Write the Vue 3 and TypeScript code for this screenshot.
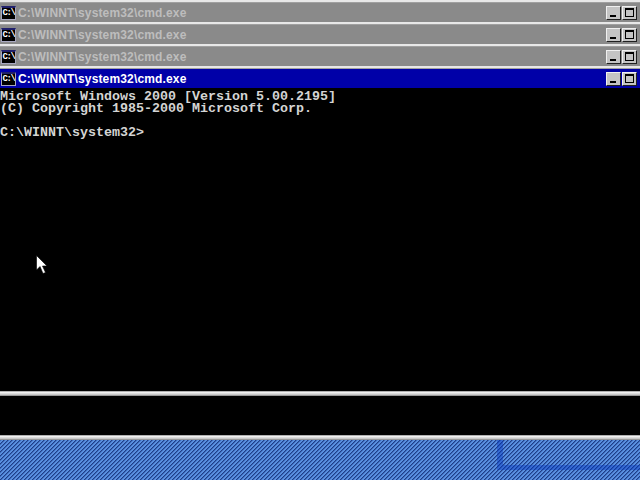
<script setup lang="ts">
const titles = [
  { id: 0, active: false },
  { id: 1, active: false },
  { id: 2, active: false },
  { id: 3, active: true },
]
const diagonal = [0, 1, 2, 3]
</script>

<template>
  <div class="screen">
    <div v-for="t in titles" :key="t.id" class="window">
      <div class="titlebar" :class="t.active ? 'active' : 'inactive'">
        <div class="appicon"><span>C:\</span></div>
        <span class="title">C:\WINNT\system32\cmd.exe</span>
        <div class="buttons">
          <div class="btn min"><i></i></div>
          <div class="btn max"><i></i></div>
        </div>
      </div>
    </div>
    <div class="console">
      <div class="line">Microsoft Windows 2000 [Version 5.00.2195]</div>
      <div class="line">(C) Copyright 1985-2000 Microsoft Corp.</div>
      <div class="line">&nbsp;</div>
      <div class="line">C:\WINNT\system32&gt;</div>
      <svg class="cursor" width="12" height="20" viewBox="0 0 12 20">
        <path d="M0.5 0.5V15L4 11.5L7 18.5L9.5 17.5L6.5 11H11Z" fill="#fff" stroke="#000" stroke-width="0.6" />
      </svg>
    </div>
    <div class="edge"></div>
    <div class="strip"></div>
    <div class="edge"></div>
    <div class="desktop">
      <svg class="hatch" width="640" height="40" shape-rendering="crispEdges">
        <defs>
          <pattern id="hatch" width="4" height="4" patternUnits="userSpaceOnUse">
            <rect width="4" height="4" fill="#5a90e0" />
            <template v-for="y in diagonal" :key="y">
              <rect :x="3 - y" :y="y" width="1" height="1" fill="#1f3f88" />
              <rect :x="(4 - y) % 4" :y="y" width="1" height="1" fill="#3c68b8" />
            </template>
          </pattern>
        </defs>
        <rect width="640" height="40" fill="url(#hatch)" />
      </svg>
      <div class="corner"></div>
    </div>
  </div>
</template>

<style>
html, body { margin: 0; background: #000; }
</style>

<style scoped>
.screen {
  width: 640px;
  height: 480px;
  display: flex;
  flex-direction: column;
  overflow: hidden;
  background: #000;
}
.window {
  height: 22px;
  flex: none;
  box-sizing: border-box;
  padding-top: 3px;
  background: linear-gradient(#e8e8e8 0 2px, #a0a0a0 2px);
}
.titlebar {
  height: 19px;
  display: flex;
  align-items: center;
  box-sizing: border-box;
}
.inactive { background: #8a8a8a; color: #bdbdbd; }
.active { background: #0000a8; color: #fff; border-bottom: 1px solid #5050a0; height: 20px; }
.appicon {
  flex: none;
  width: 15px;
  height: 14px;
  margin: 0 2px 0 1px;
  box-sizing: border-box;
  background: #000;
  border: 1px solid #a8a8c0;
  border-top: 2px solid #20206a;
  color: #fff;
  overflow: hidden;
  display: flex;
  align-items: center;
  justify-content: center;
}
.appicon span {
  font: bold 9px/10px "Liberation Mono", monospace;
  letter-spacing: -1.4px;
}
.title {
  font: bold 12px "Liberation Sans", Arial, sans-serif;
  letter-spacing: 0.15px;
}
.buttons {
  margin-left: auto;
  display: flex;
  gap: 1px;
  padding-right: 3px;
}
.btn {
  width: 15px;
  height: 14px;
  box-sizing: border-box;
  background: #c4c4c4;
  border: 1px solid;
  border-color: #f0f0f0 #202020 #202020 #f0f0f0;
  position: relative;
}
.btn.min i {
  position: absolute;
  left: 3px;
  bottom: 2px;
  width: 6px;
  height: 2px;
  background: #000;
}
.btn.max i {
  position: absolute;
  left: 2px;
  top: 1px;
  right: 2px;
  bottom: 2px;
  border: 1px solid #000;
  border-top-width: 2px;
}
.console {
  height: 303px;
  flex: none;
  position: relative;
  box-sizing: border-box;
  padding-top: 3px;
  color: #d4d4d4;
  font: bold 13.33px/12px "Liberation Mono", "DejaVu Sans Mono", monospace;
  background: #000;
}
.line { height: 12px; white-space: pre; }
.cursor { position: absolute; left: 36px; top: 167px; }
.edge {
  height: 5px;
  flex: none;
  background: linear-gradient(#909090 0, #f0f0f0 30%, #c8c8c8 70%, #808080 100%);
}
.strip { height: 39px; flex: none; background: #000; }
.desktop {
  flex: 1;
  position: relative;
  background-color: #5a90e0;
}
.hatch { display: block; }
.corner {
  position: absolute;
  left: 497px;
  top: 0;
  right: 0;
  height: 30px;
  box-sizing: border-box;
  border-left: 6px solid rgba(0, 50, 190, 0.4);
  border-bottom: 5px solid rgba(0, 50, 190, 0.4);
}
</style>
